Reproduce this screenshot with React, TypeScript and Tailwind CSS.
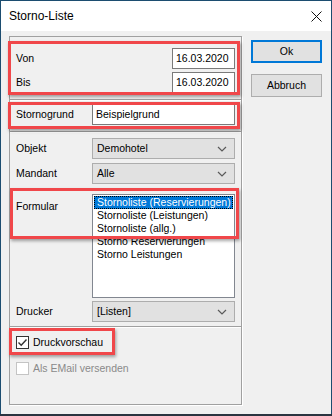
import type { ReactNode } from 'react';

const font = { fontFamily: '"Liberation Sans", Arial, sans-serif' };

function Chevron() {
    return (
        <svg width="10" height="6" viewBox="0 0 10 6" className="shrink-0">
            <path d="M1 1 L5 5 L9 1" fill="none" stroke="#5a5a5a" strokeWidth="1.2" />
        </svg>
    );
}

function Combo({ value }: { value: string }) {
    return (
        <div className="flex h-[21px] w-[143px] items-center justify-between border border-[#adadad] bg-[#e1e1e1] pl-[4px] pr-[7px]">
            <span>{value}</span>
            <Chevron />
        </div>
    );
}

function Row({ label, children, className }: { label: string; children: ReactNode; className?: string }) {
    return (
        <div className={`flex items-center justify-between ${className ?? ''}`}>
            <span>{label}</span>
            {children}
        </div>
    );
}

function CheckBox({ label, checked, disabled }: { label: string; checked?: boolean; disabled?: boolean }) {
    return (
        <div className={`flex items-center gap-[4px] ${disabled ? 'text-[#8a8a8a]' : 'text-black'}`}>
            <div
                className={`flex h-[13px] w-[13px] items-center justify-center border bg-white ${
                    disabled ? 'border-[#c4c4c4]' : 'border-[#333333]'
                }`}
            >
                {checked && (
                    <svg width="11" height="11" viewBox="0 0 11 11">
                        <path d="M1.5 5.5 L4.2 8.2 L9.5 2.5" fill="none" stroke="#333" strokeWidth="1.4" />
                    </svg>
                )}
            </div>
            <span>{label}</span>
        </div>
    );
}

function Mark({ className }: { className: string }) {
    return (
        <div
            className={`pointer-events-none absolute border-[3px] border-[#f0474a] shadow-[1px_2px_3px_rgba(0,0,0,0.35)] ${className}`}
        />
    );
}

const listItems = [
    'Stornoliste (Reservierungen)',
    'Stornoliste (Leistungen)',
    'Stornoliste (allg.)',
    'Storno Reservierungen',
    'Storno Leistungen',
];

export default function App() {
    return (
        <div className="relative h-[416px] w-[332px] overflow-hidden bg-[#2b3440]" style={font}>
            <div className="flex h-[414px] flex-col border-x border-t border-[#1c4d70] bg-[#f0f0f0]">
                <div className="flex h-[30px] items-center justify-between bg-white pl-[8px] pr-[9px] text-[12px] text-black">
                    <span>Storno-Liste</span>
                    <svg width="11" height="11" viewBox="0 0 11 11">
                        <path d="M0.5 0.5 L10.5 10.5 M10.5 0.5 L0.5 10.5" stroke="#111" strokeWidth="1" />
                    </svg>
                </div>

                <div className="flex gap-[9px] pl-[8px] pt-[5px] text-[10.5px] text-black">
                    <div className="flex h-[369px] w-[233px] flex-col border border-[#a0a0a0] shadow-[1px_1px_0_#fff]">
                        <div className="flex h-[62px] flex-col gap-[3px] px-[6px] pt-[11px]">
                            <Row label="Von">
                                <div className="flex h-[21px] w-[63px] items-center border border-[#7a7a7a] bg-white pl-[3px]">
                                    16.03.2020
                                </div>
                            </Row>
                            <Row label="Bis">
                                <div className="flex h-[21px] w-[63px] items-center border border-[#7a7a7a] bg-white pl-[3px]">
                                    16.03.2020
                                </div>
                            </Row>
                        </div>

                        <div className="flex h-[32px] flex-col border-t border-[#a0a0a0] px-[6px] pt-[4px] shadow-[inset_0_1px_0_#fff]">
                            <Row label="Stornogrund">
                                <div className="flex h-[21px] w-[143px] items-center border border-[#7a7a7a] bg-white pl-[3px]">
                                    Beispielgrund
                                </div>
                            </Row>
                        </div>

                        <div className="flex h-[195px] flex-col border-t border-[#a0a0a0] px-[6px] pt-[6px] shadow-[inset_0_1px_0_#fff]">
                            <Row label="Objekt">
                                <Combo value="Demohotel" />
                            </Row>
                            <Row label="Mandant" className="mt-[4px]">
                                <Combo value="Alle" />
                            </Row>
                            <div className="mt-[10px] flex justify-between">
                                <span className="pt-[5px]">Formular</span>
                                <div className="h-[104px] w-[143px] border border-[#828790] bg-white p-[1px]">
                                    {listItems.map((item, i) => (
                                        <div
                                            key={item}
                                            className={`flex h-[13px] items-center pl-[3px] leading-[13px] ${
                                                i === 0 ? 'bg-[#0078d7] text-white outline-1 outline-dotted outline-offset-[-1px] outline-black' : ''
                                            }`}
                                        >
                                            {item}
                                        </div>
                                    ))}
                                </div>
                            </div>
                            <Row label="Drucker" className="mt-[3px]">
                                <Combo value="[Listen]" />
                            </Row>
                        </div>

                        <div className="flex flex-1 flex-col gap-[10px] border-t border-[#a0a0a0] pl-[6px] pt-[8px] shadow-[inset_0_1px_0_#fff]">
                            <CheckBox label="Druckvorschau" checked />
                            <CheckBox label="Als EMail versenden" disabled />
                        </div>
                    </div>

                    <div className="flex flex-col gap-[11px] pt-[4px]">
                        <div className="flex h-[23px] w-[71px] items-center justify-center border-2 border-[#0078d7] bg-[#e1e1e1]">
                            Ok
                        </div>
                        <div className="flex h-[23px] w-[71px] items-center justify-center border border-[#adadad] bg-[#e1e1e1]">
                            Abbruch
                        </div>
                    </div>
                </div>
            </div>

            <Mark className="left-[8px] top-[41px] h-[54px] w-[232px]" />
            <Mark className="left-[8px] top-[102px] h-[27px] w-[232px]" />
            <Mark className="left-[10px] top-[188px] h-[51px] w-[229px]" />
            <Mark className="left-[9px] top-[328px] h-[27px] w-[106px]" />
        </div>
    );
}
